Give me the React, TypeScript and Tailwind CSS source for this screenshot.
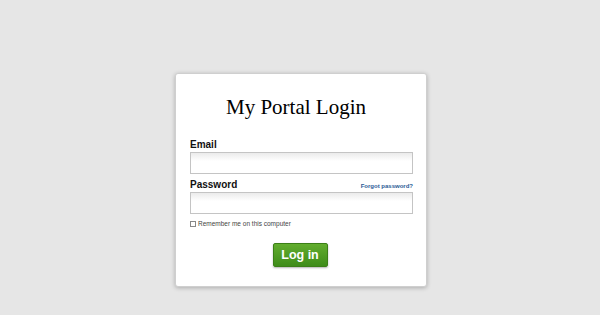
export default function App() {
  return (
    <div className="w-[600px] h-[315px] bg-[#e6e6e6] flex justify-center pt-[73px]">
      <div className="ml-[2px] w-[252px] h-[214px] bg-white border border-[#cfcfcf] rounded-[3px] shadow-[0_1px_4px_rgba(0,0,0,0.25)] flex flex-col px-[14px]">
        <h1 className="mt-[20px] h-[26px] text-center pr-[10px] text-[21px] leading-[26px] text-black" style={{ fontFamily: '"Liberation Serif", serif' }}>
          My Portal Login
        </h1>
        <div className="flex flex-col" style={{ fontFamily: '"Liberation Sans", Arial, sans-serif' }}>
          <label className="mt-[19px] text-[10px] leading-[12px] font-bold text-[#111]">Email</label>
          <div className="mt-[1px] h-[22px] w-[223px] border border-[#c4c4c4] bg-gradient-to-b from-[#ebebeb] to-white to-[40%]" />
          <div className="mt-[5px] flex items-end justify-between w-[223px]">
            <span className="text-[10px] leading-[12px] font-bold text-[#111]">Password</span>
            <span className="text-[6px] leading-[8px] font-bold text-[#2a5a96] mb-[1px]">Forgot password?</span>
          </div>
          <div className="mt-[1px] h-[22px] w-[223px] border border-[#c4c4c4] bg-gradient-to-b from-[#ebebeb] to-white to-[40%]" />
          <div className="mt-[6px] flex items-center gap-[2px]">
            <div className="w-[6px] h-[6px] border border-[#888] bg-white" />
            <span className="text-[6.5px] leading-[8px] text-[#444]">Remember me on this computer</span>
          </div>
          <div className="mt-[15px] flex justify-center pr-[2px]">
            <div className="w-[55px] h-[24px] rounded-[2px] border border-[#3b7f17] bg-gradient-to-b from-[#62ad2e] to-[#3e8c19] flex items-center justify-center text-white font-bold text-[12.5px] shadow-[0_1px_2px_rgba(0,0,0,0.3)]">
              Log in
            </div>
          </div>
        </div>
      </div>
    </div>
  );
}
